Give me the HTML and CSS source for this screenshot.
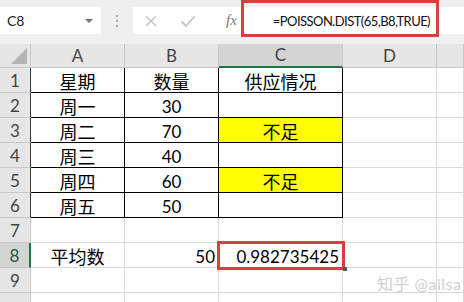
FILE: index.html
```html
<!DOCTYPE html>
<html lang="zh">
<head>
  <meta charset="UTF-8">
  <title>POISSON.DIST</title>
  <link rel="stylesheet" href="styles.css">
</head>
<body>
  <div class="app">
    <div class="toolbar">
      <div class="namebox">
        <span>C8</span>
        <span class="caret"></span>
      </div>
      <div class="grip"><i></i><i></i><i></i></div>
      <div class="formula">
        <svg class="tool" width="14" height="14" viewBox="0 0 14 14"><path d="M2 2L12 12M12 2L2 12" stroke="#c4c4c4" stroke-width="1.6" fill="none"/></svg>
        <svg class="tool" width="16" height="14" viewBox="0 0 16 14"><path d="M1.5 7.5L6 12L14.5 2.5" stroke="#c4c4c4" stroke-width="1.8" fill="none"/></svg>
        <span class="fx">fx</span>
        <div class="input">=POISSON.DIST(65,B8,TRUE)</div>
      </div>
      <div class="mark mark-formula"></div>
    </div>

    <div class="sheet">
      <!-- header -->
      <div class="hd corner"></div>
      <div class="hd">A</div>
      <div class="hd">B</div>
      <div class="hd sel-col">C</div>
      <div class="hd">D</div>
      <div class="hd"></div>

      <div class="rh boxed">1</div>
      <div class="c box cjk">星期</div>
      <div class="c box cjk">数量</div>
      <div class="c box cjk">供应情况</div>
      <div class="c"></div>
      <div class="c"></div>

      <div class="rh boxed">2</div>
      <div class="c box cjk">周一</div>
      <div class="c box">30</div>
      <div class="c box"></div>
      <div class="c"></div>
      <div class="c"></div>

      <div class="rh boxed">3</div>
      <div class="c box cjk">周二</div>
      <div class="c box">70</div>
      <div class="c box cjk fill">不足</div>
      <div class="c"></div>
      <div class="c"></div>

      <div class="rh boxed">4</div>
      <div class="c box cjk">周三</div>
      <div class="c box">40</div>
      <div class="c box"></div>
      <div class="c"></div>
      <div class="c"></div>

      <div class="rh boxed">5</div>
      <div class="c box cjk">周四</div>
      <div class="c box">60</div>
      <div class="c box cjk fill">不足</div>
      <div class="c"></div>
      <div class="c"></div>

      <div class="rh boxed">6</div>
      <div class="c box cjk">周五</div>
      <div class="c box">50</div>
      <div class="c box"></div>
      <div class="c"></div>
      <div class="c"></div>

      <div class="rh">7</div>
      <div class="c"></div>
      <div class="c"></div>
      <div class="c"></div>
      <div class="c"></div>
      <div class="c"></div>

      <div class="rh sel-row">8</div>
      <div class="c cjk">平均数</div>
      <div class="c num">50</div>
      <div class="c num active">0.982735425<span class="handle"></span></div>
      <div class="c"></div>
      <div class="c"></div>

      <div class="rh">9</div>
      <div class="c"></div>
      <div class="c"></div>
      <div class="c"></div>
      <div class="c"></div>
      <div class="c"></div>

      <div class="rh last"></div>
      <div class="c"></div>
      <div class="c"></div>
      <div class="c"></div>
      <div class="c"></div>
      <div class="c"></div>
    </div>

    <div class="watermark">知乎 @ailsa</div>
  </div>
</body>
</html>
```

FILE: styles.css
```css
body {
  margin: 0;
  font-family: Lato, "Noto Sans CJK SC", sans-serif;
  background: #fff;
  color: #000;
  overflow: hidden;
}

.app {
  position: relative;
  width: 464px;
  height: 302px;
  overflow: hidden;
}

.toolbar {
  position: relative;
  height: 44px;
  background: #efefef;
  display: flex;
  align-items: flex-start;
  padding-top: 7px;
  box-sizing: border-box;
}

.namebox {
  width: 101px;
  height: 27px;
  background: #fff;
  box-sizing: border-box;
  display: flex;
  align-items: center;
  justify-content: space-between;
  padding: 0 8px 0 7px;
  font-size: 14px;
  color: #222;
}

.caret {
  width: 0;
  height: 0;
  border-left: 4px solid transparent;
  border-right: 4px solid transparent;
  border-top: 4px solid #777;
}

.grip {
  width: 32px;
  height: 27px;
  display: flex;
  flex-direction: column;
  align-items: center;
  justify-content: center;
  gap: 3px;
}

.grip i {
  width: 2px;
  height: 2px;
  background: #a8a8a8;
}

.formula {
  flex: 1;
  height: 27px;
  background: #fff;
  display: flex;
  align-items: center;
  padding-left: 11px;
}

.tool {
  margin-right: 22px;
}

.fx {
  font-family: "Liberation Serif", serif;
  font-style: italic;
  font-size: 15px;
  color: #7a7a7a;
  margin-left: 8px;
}

.input {
  margin-left: 36px;
  font-size: 13px;
  letter-spacing: -0.55px;
  color: #111;
  white-space: nowrap;
}

.mark {
  position: absolute;
  border: 3px solid #d8403d;
  box-sizing: border-box;
}

.mark-formula {
  left: 241px;
  top: 0;
  width: 198px;
  height: 37px;
}

.sheet {
  display: grid;
  grid-template-columns: 31px 94px 94px 124px 94px 1fr;
  grid-template-rows: 24px;
  grid-auto-rows: 25px;
}

.sheet > div {
  box-sizing: border-box;
  border-right: 1px solid #d9d9d9;
  border-bottom: 1px solid #d9d9d9;
  display: flex;
  align-items: flex-end;
  justify-content: center;
  font-size: 17px;
  line-height: 20px;
  white-space: nowrap;
}

.sheet > .hd {
  background: #e6e6e6;
  border-color: #c8c8c8;
  color: #444;
  align-items: center;
}

.sheet > .corner {
  position: relative;
}

.corner::after {
  content: "";
  position: absolute;
  right: 3px;
  bottom: 3px;
  width: 16px;
  height: 16px;
  background: #b4b4b4;
  clip-path: polygon(100% 0, 100% 100%, 0 100%);
}

.sheet > .sel-col {
  background: #d4d4d4;
  border-bottom: 2px solid #217346;
}

.sheet > .rh {
  background: #e6e6e6;
  border-color: #c8c8c8;
  color: #444;
  padding-bottom: 1px;
}

.sheet > .rh.boxed {
  border-right-color: #3a3a3a;
}

.sheet > .sel-row {
  background: #d4d4d4;
  border-right: 2px solid #217346;
  color: #235a3c;
}

.sheet > .box {
  border-right-color: #000;
  border-bottom-color: #000;
}

.sheet > .cjk {
  font-size: 18px;
}

.sheet > .fill {
  background: #ffff00;
}

.sheet > .num {
  justify-content: flex-end;
  padding-right: 3px;
}

.sheet > .active {
  position: relative;
  outline: 3px solid #d8403d;
  outline-offset: -1px;
}

.handle {
  position: absolute;
  right: -5px;
  bottom: -4px;
  width: 4px;
  height: 4px;
  background: #555;
}

.watermark {
  position: absolute;
  left: 377px;
  top: 271px;
  font-size: 16px;
  color: #cfcfcf;
  letter-spacing: 0.5px;
}
```
